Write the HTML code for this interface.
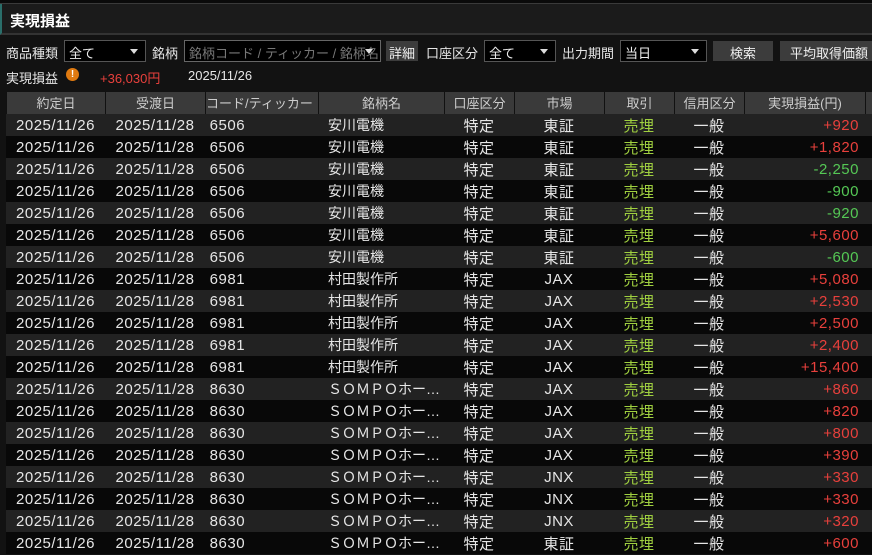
<!DOCTYPE html>
<html><head><meta charset="utf-8"><style>
*{margin:0;padding:0;box-sizing:border-box}
body{width:872px;height:555px;overflow:hidden;background:#121212;color:#e6e6e6;font-family:"Liberation Sans","Noto Sans CJK JP",sans-serif;font-size:13px;position:relative;white-space:nowrap}
.abs{position:absolute}
.top{left:0;top:0;width:872px;height:4px;background:#0a0a0a;border-bottom:1px solid #3a3a3a}
.title{left:0;top:4px;width:872px;height:31px;background:#1b1b1b;border-left:2px solid #2a6e6a;border-bottom:2px solid #333;font-weight:bold;font-size:15px;color:#fff;padding:6px 0 0 8px}
.sel{height:22px;border:1px solid #555;background:#000;color:#eee;padding:2px 4px;font-size:13px;overflow:hidden}
.sel:after{content:"";position:absolute;right:7px;top:8px;border-left:4px solid transparent;border-right:4px solid transparent;border-top:5px solid #ddd}
.btn{height:20px;background:#3c3c3c;color:#eee;text-align:center;font-size:13px;padding-top:2px;overflow:hidden}
.lbl{font-size:13px}
table{position:absolute;left:6px;border-collapse:collapse;font-size:15px;letter-spacing:0.5px;table-layout:fixed;width:869px}
th{height:22px;background:#3a3a3a;color:#ccc;font-weight:normal;border:1px solid #111;border-top:none;font-size:13px;letter-spacing:0;overflow:hidden;white-space:nowrap;padding:0}
td{height:22px;padding:0;white-space:nowrap;overflow:hidden}
td:nth-child(4){text-overflow:ellipsis;letter-spacing:0;font-size:14px}
tr:nth-child(odd) td{background:#222}
tr:nth-child(even) td{background:#080808}
.r{color:#e8403c;text-align:right;padding-right:6px}
.g{color:#55c855;text-align:right;padding-right:6px}
.y{color:#a0d040;text-align:center}
.c{text-align:center}
</style></head><body>
<div class="abs top"></div>
<div class="abs title">実現損益</div>
<div class="abs lbl" style="left:6px;top:43px">商品種類</div>
<div class="abs sel" style="left:64px;top:40px;width:82px">全て</div>
<div class="abs lbl" style="left:152px;top:43px">銘柄</div>
<div class="abs sel" style="left:184px;top:40px;width:197px;color:#777;border-color:#666;padding-right:20px">銘柄コード / ティッカー / 銘柄名</div>
<div class="abs btn" style="left:386px;top:41px;width:32px">詳細</div>
<div class="abs lbl" style="left:426px;top:43px">口座区分</div>
<div class="abs sel" style="left:484px;top:40px;width:72px">全て</div>
<div class="abs lbl" style="left:562px;top:43px">出力期間</div>
<div class="abs sel" style="left:620px;top:40px;width:87px">当日</div>
<div class="abs btn" style="left:713px;top:41px;width:60px">検索</div>
<div class="abs btn" style="left:780px;top:41px;width:100px;text-align:left;padding-left:10px">平均取得価額</div>
<div class="abs lbl" style="left:6px;top:68px">実現損益</div>
<div class="abs" style="left:66px;top:68px;width:13px;height:13px;border-radius:50%;background:#e07a10;color:#fff;font-size:10px;font-weight:bold;text-align:center;line-height:13px">!</div>
<div class="abs" style="left:100px;top:68px;color:#e8403c">+36,030円</div>
<div class="abs" style="left:188px;top:68px">2025/11/26</div>
<table style="top:92px">
<colgroup><col style="width:99px"><col style="width:100px"><col style="width:113px"><col style="width:126px"><col style="width:70px"><col style="width:90px"><col style="width:70px"><col style="width:70px"><col style="width:121px"><col style="width:10px"></colgroup>
<tr><th>約定日</th><th>受渡日</th><th>コード/ティッカー <span style="font-size:8px;vertical-align:top">▲</span></th><th>銘柄名</th><th>口座区分</th><th>市場</th><th>取引</th><th>信用区分</th><th>実現損益(円)</th><th></th></tr>
</table>
<table style="top:114px" id="t">
<colgroup><col style="width:99px"><col style="width:100px"><col style="width:113px"><col style="width:126px"><col style="width:70px"><col style="width:90px"><col style="width:70px"><col style="width:70px"><col style="width:121px"><col style="width:10px"></colgroup>
<tbody>
<tr><td class="c">2025/11/26</td><td class="c">2025/11/28</td><td>&nbsp;6506</td><td style="padding-left:10px">安川電機</td><td class="c">特定</td><td class="c">東証</td><td class="y">売埋</td><td class="c">一般</td><td class="r">+920</td><td></td></tr>
<tr><td class="c">2025/11/26</td><td class="c">2025/11/28</td><td>&nbsp;6506</td><td style="padding-left:10px">安川電機</td><td class="c">特定</td><td class="c">東証</td><td class="y">売埋</td><td class="c">一般</td><td class="r">+1,820</td><td></td></tr>
<tr><td class="c">2025/11/26</td><td class="c">2025/11/28</td><td>&nbsp;6506</td><td style="padding-left:10px">安川電機</td><td class="c">特定</td><td class="c">東証</td><td class="y">売埋</td><td class="c">一般</td><td class="g">-2,250</td><td></td></tr>
<tr><td class="c">2025/11/26</td><td class="c">2025/11/28</td><td>&nbsp;6506</td><td style="padding-left:10px">安川電機</td><td class="c">特定</td><td class="c">東証</td><td class="y">売埋</td><td class="c">一般</td><td class="g">-900</td><td></td></tr>
<tr><td class="c">2025/11/26</td><td class="c">2025/11/28</td><td>&nbsp;6506</td><td style="padding-left:10px">安川電機</td><td class="c">特定</td><td class="c">東証</td><td class="y">売埋</td><td class="c">一般</td><td class="g">-920</td><td></td></tr>
<tr><td class="c">2025/11/26</td><td class="c">2025/11/28</td><td>&nbsp;6506</td><td style="padding-left:10px">安川電機</td><td class="c">特定</td><td class="c">東証</td><td class="y">売埋</td><td class="c">一般</td><td class="r">+5,600</td><td></td></tr>
<tr><td class="c">2025/11/26</td><td class="c">2025/11/28</td><td>&nbsp;6506</td><td style="padding-left:10px">安川電機</td><td class="c">特定</td><td class="c">東証</td><td class="y">売埋</td><td class="c">一般</td><td class="g">-600</td><td></td></tr>
<tr><td class="c">2025/11/26</td><td class="c">2025/11/28</td><td>&nbsp;6981</td><td style="padding-left:10px">村田製作所</td><td class="c">特定</td><td class="c">JAX</td><td class="y">売埋</td><td class="c">一般</td><td class="r">+5,080</td><td></td></tr>
<tr><td class="c">2025/11/26</td><td class="c">2025/11/28</td><td>&nbsp;6981</td><td style="padding-left:10px">村田製作所</td><td class="c">特定</td><td class="c">JAX</td><td class="y">売埋</td><td class="c">一般</td><td class="r">+2,530</td><td></td></tr>
<tr><td class="c">2025/11/26</td><td class="c">2025/11/28</td><td>&nbsp;6981</td><td style="padding-left:10px">村田製作所</td><td class="c">特定</td><td class="c">JAX</td><td class="y">売埋</td><td class="c">一般</td><td class="r">+2,500</td><td></td></tr>
<tr><td class="c">2025/11/26</td><td class="c">2025/11/28</td><td>&nbsp;6981</td><td style="padding-left:10px">村田製作所</td><td class="c">特定</td><td class="c">JAX</td><td class="y">売埋</td><td class="c">一般</td><td class="r">+2,400</td><td></td></tr>
<tr><td class="c">2025/11/26</td><td class="c">2025/11/28</td><td>&nbsp;6981</td><td style="padding-left:10px">村田製作所</td><td class="c">特定</td><td class="c">JAX</td><td class="y">売埋</td><td class="c">一般</td><td class="r">+15,400</td><td></td></tr>
<tr><td class="c">2025/11/26</td><td class="c">2025/11/28</td><td>&nbsp;8630</td><td style="padding-left:10px">ＳＯＭＰＯホール…</td><td class="c">特定</td><td class="c">JAX</td><td class="y">売埋</td><td class="c">一般</td><td class="r">+860</td><td></td></tr>
<tr><td class="c">2025/11/26</td><td class="c">2025/11/28</td><td>&nbsp;8630</td><td style="padding-left:10px">ＳＯＭＰＯホール…</td><td class="c">特定</td><td class="c">JAX</td><td class="y">売埋</td><td class="c">一般</td><td class="r">+820</td><td></td></tr>
<tr><td class="c">2025/11/26</td><td class="c">2025/11/28</td><td>&nbsp;8630</td><td style="padding-left:10px">ＳＯＭＰＯホール…</td><td class="c">特定</td><td class="c">JAX</td><td class="y">売埋</td><td class="c">一般</td><td class="r">+800</td><td></td></tr>
<tr><td class="c">2025/11/26</td><td class="c">2025/11/28</td><td>&nbsp;8630</td><td style="padding-left:10px">ＳＯＭＰＯホール…</td><td class="c">特定</td><td class="c">JAX</td><td class="y">売埋</td><td class="c">一般</td><td class="r">+390</td><td></td></tr>
<tr><td class="c">2025/11/26</td><td class="c">2025/11/28</td><td>&nbsp;8630</td><td style="padding-left:10px">ＳＯＭＰＯホール…</td><td class="c">特定</td><td class="c">JNX</td><td class="y">売埋</td><td class="c">一般</td><td class="r">+330</td><td></td></tr>
<tr><td class="c">2025/11/26</td><td class="c">2025/11/28</td><td>&nbsp;8630</td><td style="padding-left:10px">ＳＯＭＰＯホール…</td><td class="c">特定</td><td class="c">JNX</td><td class="y">売埋</td><td class="c">一般</td><td class="r">+330</td><td></td></tr>
<tr><td class="c">2025/11/26</td><td class="c">2025/11/28</td><td>&nbsp;8630</td><td style="padding-left:10px">ＳＯＭＰＯホール…</td><td class="c">特定</td><td class="c">JNX</td><td class="y">売埋</td><td class="c">一般</td><td class="r">+320</td><td></td></tr>
<tr><td class="c">2025/11/26</td><td class="c">2025/11/28</td><td>&nbsp;8630</td><td style="padding-left:10px">ＳＯＭＰＯホール…</td><td class="c">特定</td><td class="c">東証</td><td class="y">売埋</td><td class="c">一般</td><td class="r">+600</td><td></td></tr>
</tbody></table>
</body></html>
